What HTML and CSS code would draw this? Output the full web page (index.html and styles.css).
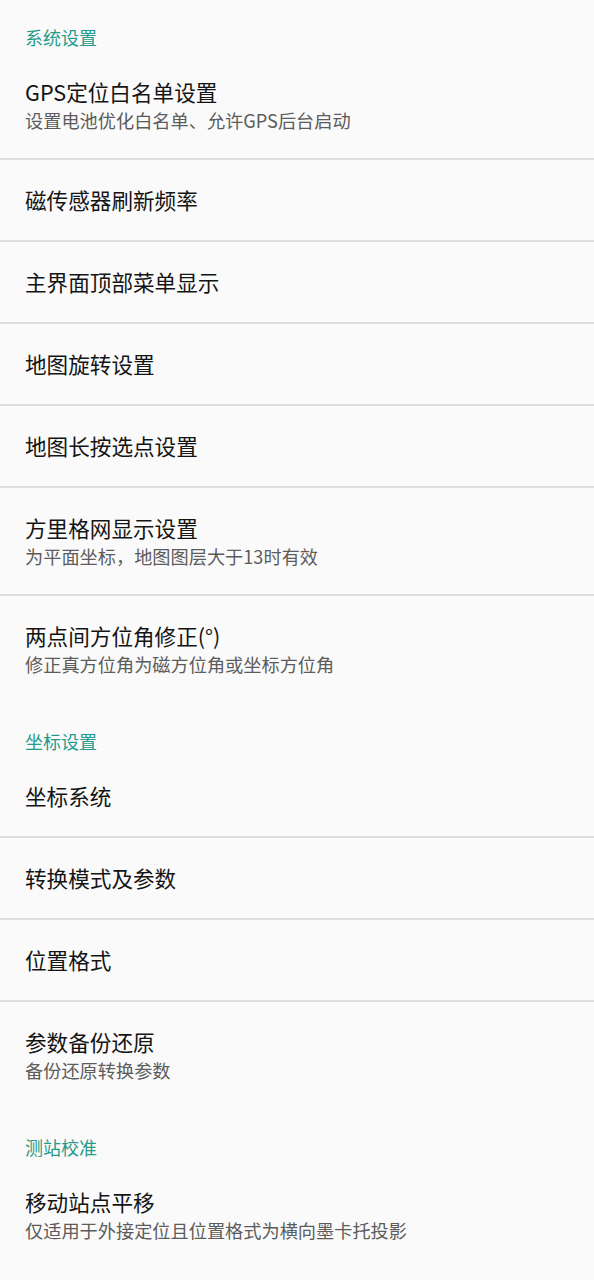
FILE: index.html
```html
<!DOCTYPE html>
<html lang="zh-CN">
<head>
  <meta charset="UTF-8" />
  <meta name="viewport" content="width=device-width, initial-scale=1.0" />
  <title>设置</title>
  <link rel="stylesheet" href="styles.css">
</head>
<body>
  <div class="prefs">
    <div class="category">系统设置</div>
    <div class="pref">
      <div class="title">GPS定位白名单设置</div>
      <div class="summary">设置电池优化白名单、允许GPS后台启动</div>
    </div>
    <div class="pref"><div class="title">磁传感器刷新频率</div></div>
    <div class="pref"><div class="title">主界面顶部菜单显示</div></div>
    <div class="pref"><div class="title">地图旋转设置</div></div>
    <div class="pref"><div class="title">地图长按选点设置</div></div>
    <div class="pref">
      <div class="title">方里格网显示设置</div>
      <div class="summary">为平面坐标，地图图层大于13时有效</div>
    </div>
    <div class="pref last">
      <div class="title">两点间方位角修正(°)</div>
      <div class="summary">修正真方位角为磁方位角或坐标方位角</div>
    </div>

    <div class="category">坐标设置</div>
    <div class="pref"><div class="title">坐标系统</div></div>
    <div class="pref"><div class="title">转换模式及参数</div></div>
    <div class="pref"><div class="title">位置格式</div></div>
    <div class="pref last">
      <div class="title">参数备份还原</div>
      <div class="summary">备份还原转换参数</div>
    </div>

    <div class="category">测站校准</div>
    <div class="pref last">
      <div class="title">移动站点平移</div>
      <div class="summary">仅适用于外接定位且位置格式为横向墨卡托投影</div>
    </div>
  </div>
</body>
</html>
```

FILE: styles.css
```css
body {
  margin: 0;
  font-family: "Noto Sans CJK SC", "Noto Sans", sans-serif;
  background: #fafafa;
  color: #1f1f1f;
}

.prefs {
  display: flex;
  flex-direction: column;
}

.category {
  height: 52px;
  box-sizing: border-box;
  padding: 25px 25px 0;
  font-size: 18px;
  line-height: 24px;
  color: #269a8b;
}

.pref {
  padding: 26px 25px 26px;
  border-bottom: 2px solid #dedede;
  display: flex;
  flex-direction: column;
}

.pref.last {
  border-bottom: none;
  padding-bottom: 28px;
}

.title {
  font-size: 21.6px;
  line-height: 28px;
  color: #141414;
}

.summary {
  font-size: 18.2px;
  line-height: 26px;
  margin-top: 1px;
  margin-bottom: -1px;
  color: #5c5c5c;
}
```
